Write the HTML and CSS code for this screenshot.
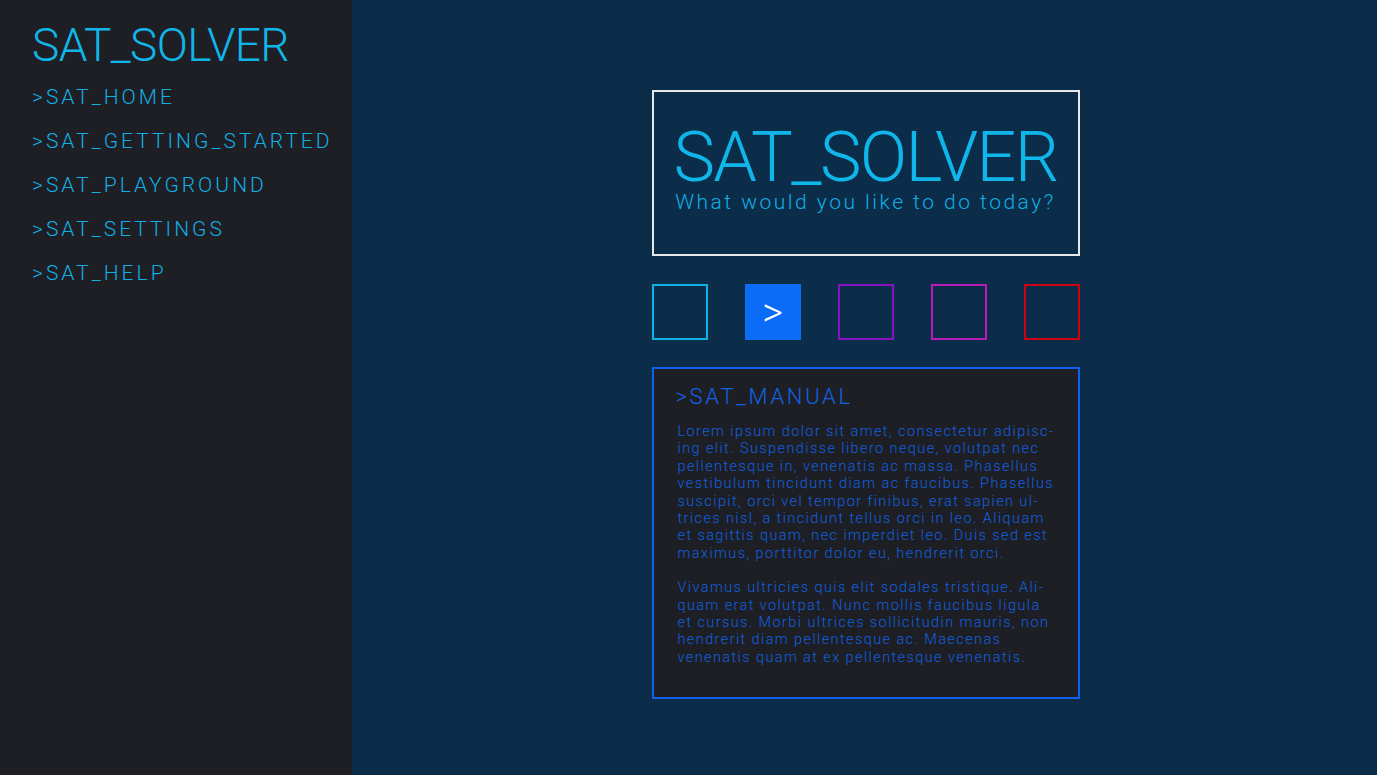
FILE: index.html
```html
<!DOCTYPE html>
<html lang="en">
<head>
<meta charset="utf-8">
<title>SAT_SOLVER</title>
<link rel="stylesheet" href="styles.css">
</head>
<body>
<div class="app">
  <aside class="sidebar">
    <div class="brand">SAT_SOLVER</div>
    <nav class="nav">
      <a class="nav-item">&gt;SAT_HOME</a>
      <a class="nav-item">&gt;SAT_GETTING_STARTED</a>
      <a class="nav-item">&gt;SAT_PLAYGROUND</a>
      <a class="nav-item">&gt;SAT_SETTINGS</a>
      <a class="nav-item">&gt;SAT_HELP</a>
    </nav>
  </aside>
  <main class="main">
    <div class="column">
      <section class="hero">
        <h1 class="hero-title">SAT_SOLVER</h1>
        <p class="hero-sub">What would you like to do today?</p>
      </section>
      <div class="tiles">
        <div class="tile tile-cyan"></div>
        <div class="tile tile-blue">&gt;</div>
        <div class="tile tile-purple"></div>
        <div class="tile tile-magenta"></div>
        <div class="tile tile-red"></div>
      </div>
      <section class="manual">
        <h2 class="manual-title">&gt;SAT_MANUAL</h2>
        <p class="manual-text">Lorem ipsum dolor sit amet, consectetur adipisc-<br>ing elit. Suspendisse libero neque, volutpat nec<br>pellentesque in, venenatis ac massa. Phasellus<br>vestibulum tincidunt diam ac faucibus. Phasellus<br>suscipit, orci vel tempor finibus, erat sapien ul-<br>trices nisl, a tincidunt tellus orci in leo. Aliquam<br>et sagittis quam, nec imperdiet leo. Duis sed est<br>maximus, porttitor dolor eu, hendrerit orci.</p>
        <p class="manual-text">Vivamus ultricies quis elit sodales tristique. Ali-<br>quam erat volutpat. Nunc mollis faucibus ligula<br>et cursus. Morbi ultrices sollicitudin mauris, non<br>hendrerit diam pellentesque ac. Maecenas<br>venenatis quam at ex pellentesque venenatis.</p>
      </section>
    </div>
  </main>
</div>
</body>
</html>
```
FILE: styles.css
```css
* { box-sizing: border-box; }
html, body { margin: 0; padding: 0; height: 100%; }
body {
  font-family: Roboto, "Liberation Sans", sans-serif;
  font-weight: 300;
  background: #0c2d4a;
}
.app { display: flex; height: 775px; }
.sidebar {
  width: 352px;
  flex: none;
  background: #1e1f24;
  padding: 20px 0 0 32px;
}
.brand {
  color: #10b6ea;
  font-size: 46px;
  line-height: 50px;
  letter-spacing: -0.6px;
}
.nav { display: flex; flex-direction: column; margin-top: 5px; }
.nav-item {
  color: #12aee4;
  font-size: 21px;
  line-height: 44px;
  letter-spacing: 3px;
  white-space: nowrap;
}
.main {
  flex: 1;
  display: flex;
  justify-content: center;
  padding: 90px 0 0 2px;
}
.column { width: 428px; display: flex; flex-direction: column; }
.hero {
  height: 166px;
  border: 2px solid #e6e8ea;
  display: flex;
  flex-direction: column;
  align-items: center;
  padding-top: 34px;
}
.hero-title {
  margin: 0;
  font-weight: 300;
  font-size: 70px;
  line-height: 62px;
  color: #10b6ea;
  letter-spacing: -1.6px;
}
.hero-sub {
  margin: 2px 0 0 0;
  font-size: 21px;
  line-height: 24px;
  color: #12aee4;
  letter-spacing: 2.5px;
}
.tiles {
  display: flex;
  justify-content: space-between;
  margin-top: 28px;
}
.tile {
  width: 56px;
  height: 56px;
  border: 2px solid;
  display: flex;
  align-items: center;
  justify-content: center;
  color: #fff;
  font-size: 40px;
}
.tile-cyan { border-color: #0fb3e8; }
.tile-blue { border-color: #0a6cf7; background: #0a6cf7; }
.tile-purple { border-color: #8512c4; }
.tile-magenta { border-color: #bb1cb8; }
.tile-red { border-color: #cc0412; }
.manual {
  margin-top: 27px;
  height: 332px;
  border: 2px solid #1061ee;
  background: #1e1f24;
  padding: 14px 18px 0 22px;
}
.manual-title {
  margin: 0 0 12px 0;
  font-weight: 300;
  font-size: 22px;
  line-height: 28px;
  color: #1062e6;
  letter-spacing: 2.7px;
}
.manual-text {
  margin: 0 0 17px 2px;
  font-size: 14.5px;
  line-height: 17.4px;
  color: #0f60e0;
  letter-spacing: 1.4px;
  white-space: nowrap;
}
```
